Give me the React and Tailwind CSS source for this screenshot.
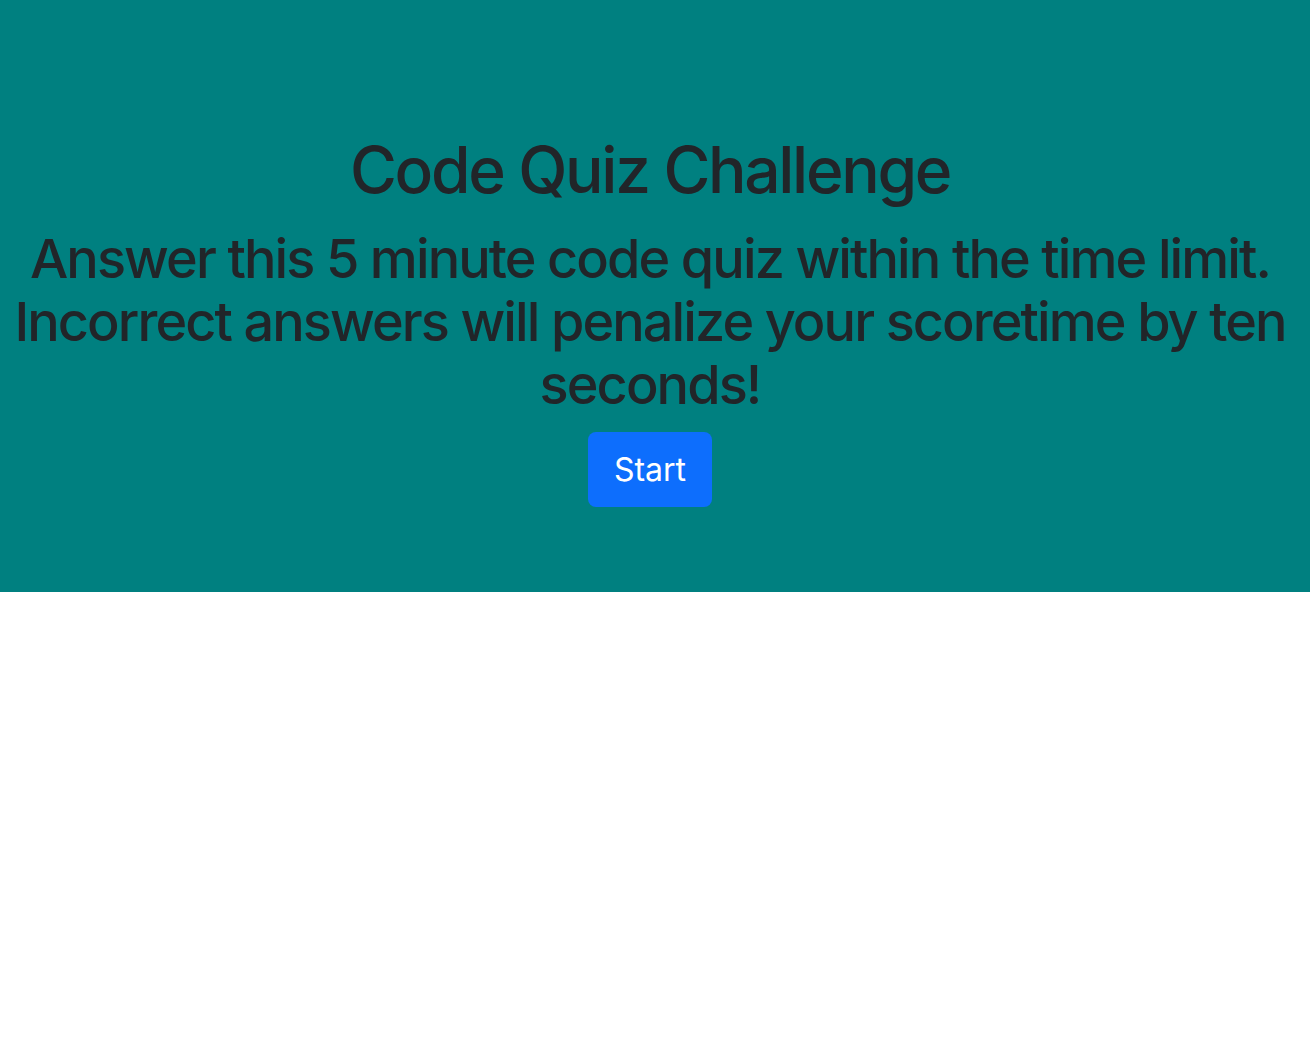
export default function App() {
  return (
    <div className="min-h-[1046px] bg-white" style={{ fontFamily: "Inter, 'Noto Sans', sans-serif" }}>
      <section className="bg-[#008080] text-[#212529] text-center pt-[131px] pb-[85px] pr-[10px] flex flex-col items-center">
        <h1 className="text-[64px] leading-[77px] font-[450] tracking-[-2.3px]">Code Quiz Challenge</h1>
        <h2 className="mt-[19px] text-[54px] leading-[63px] font-medium tracking-[-1.9px]">
          Answer this 5 minute code quiz within the time limit. Incorrect answers will penalize your scoretime by ten seconds!
        </h2>
        <button className="mt-[16px] h-[75px] w-[124px] rounded-[8px] bg-[#0d6efd] text-white text-[32px] leading-[48px]">
          Start
        </button>
      </section>
    </div>
  );
}
